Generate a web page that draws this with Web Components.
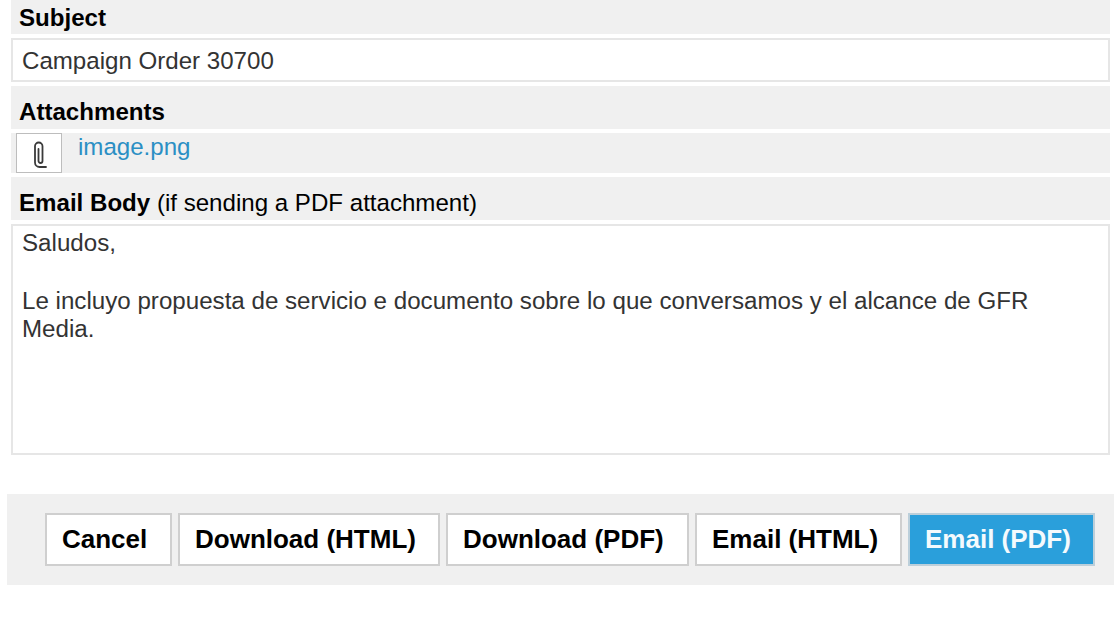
<!DOCTYPE html>
<html>
<head>
<meta charset="utf-8">
<title>Email</title>
<style>
    html, body { margin: 0; background: #fff; }
    body { font-family: "Liberation Sans", Arial, sans-serif; overflow: hidden; }
</style>
</head>
<body>
<email-form>
    <form-label style="--h: 34px; --pb: 2px">Subject</form-label>
    <form-field style="--h: 44px">Campaign Order 30700</form-field>
    <form-label style="--h: 43px">Attachments</form-label>
    <attachment-row href="#">image.png</attachment-row>
    <form-label style="--h: 43px">Email Body <span style="font-weight: normal">(if sending a PDF attachment)</span></form-label>
    <form-field style="--h: 231px" multiline>Saludos,<br><br>Le incluyo propuesta de servicio e documento sobre lo que conversamos y el alcance de GFR Media.</form-field>
    <button-bar slot="actions">
        <action-button style="--w: 127px">Cancel</action-button>
        <action-button style="--w: 262px">Download (HTML)</action-button>
        <action-button style="--w: 243px">Download (PDF)</action-button>
        <action-button style="--w: 207px">Email (HTML)</action-button>
        <action-button style="--w: 187px" primary>Email (PDF)</action-button>
    </button-bar>
</email-form>

<script>
class EmailForm extends HTMLElement {
    constructor() {
        super();
        this.attachShadow({ mode: 'open' });
        this.shadowRoot.innerHTML = `
            <style>
                :host {
                    display: block;
                    width: 1120px;
                    height: 626px;
                    box-sizing: border-box;
                    padding: 0 10px 0 11px;
                }
                .fields {
                    display: flex;
                    flex-direction: column;
                    gap: 4px;
                }
                .actions {
                    margin: 39px -4px 0 -4px;
                }
            </style>
            <div class="fields"><slot></slot></div>
            <div class="actions"><slot name="actions"></slot></div>
        `;
    }
}

class FormLabel extends HTMLElement {
    constructor() {
        super();
        this.attachShadow({ mode: 'open' });
        this.shadowRoot.innerHTML = `
            <style>
                :host {
                    display: flex;
                    align-items: flex-end;
                    height: var(--h);
                    box-sizing: border-box;
                    padding: 0 0 var(--pb, 3px) 8px;
                    background: #f0f0f0;
                    color: #000;
                    font-size: 24.1px;
                    font-weight: bold;
                    line-height: 28px;
                    white-space: pre-wrap;
                }
            </style>
            <div><slot></slot></div>
        `;
    }
}

class FormField extends HTMLElement {
    constructor() {
        super();
        this.attachShadow({ mode: 'open' });
        this.shadowRoot.innerHTML = `
            <style>
                :host {
                    display: block;
                    height: var(--h);
                    box-sizing: border-box;
                    padding: 7px 9px;
                    background: #fff;
                    border: 2px solid #e6e6e6;
                    color: #333;
                    font-size: 24.1px;
                    line-height: 28.8px;
                }
                :host([multiline]) {
                    padding-top: 3px;
                    padding-right: 60px;
                    font-size: 24.15px;
                }
            </style>
            <slot></slot>
        `;
    }
}

class AttachmentRow extends HTMLElement {
    constructor() {
        super();
        this.attachShadow({ mode: 'open' });
        this.shadowRoot.innerHTML = `
            <style>
                :host {
                    display: flex;
                    gap: 16px;
                    height: 40px;
                    box-sizing: border-box;
                    padding-left: 5px;
                    background: #f0f0f0;
                }
                .thumb {
                    display: flex;
                    align-items: center;
                    justify-content: center;
                    width: 46px;
                    height: 40px;
                    box-sizing: border-box;
                    padding: 3px 0 0 2px;
                    background: #fff;
                    border: 1px solid #bdbdbd;
                }
                a {
                    color: #2b8fc4;
                    font-size: 24.1px;
                    line-height: 28px;
                    text-decoration: none;
                }
            </style>
            <div class="thumb">
                <svg width="14" height="28" viewBox="0 0 14 28" fill="none" stroke="#3a3a3a" stroke-width="1.8" stroke-linecap="round">
                    <path d="M13 26H6.500A4.500 4.500 0 0 1 2 21.500V5.250a3.750 3.750 0 0 1 7.500 0V20a2 2 0 0 1-4 0V8"/>
                </svg>
            </div>
            <a href="${this.getAttribute('href')}"><slot></slot></a>
        `;
    }
}

class ButtonBar extends HTMLElement {
    constructor() {
        super();
        this.attachShadow({ mode: 'open' });
        this.shadowRoot.innerHTML = `
            <style>
                :host {
                    display: flex;
                    justify-content: flex-end;
                    gap: 6px;
                    height: 91px;
                    box-sizing: border-box;
                    padding: 19px 19px 0 0;
                    background: #f0f0f0;
                }
            </style>
            <slot></slot>
        `;
    }
}

class ActionButton extends HTMLElement {
    constructor() {
        super();
        this.attachShadow({ mode: 'open' });
        this.shadowRoot.innerHTML = `
            <style>
                :host {
                    display: flex;
                    align-items: center;
                    width: var(--w);
                    height: 53px;
                    box-sizing: border-box;
                    padding-left: 15px;
                    background: #fff;
                    border: 2px solid #cfcfcf;
                    color: #000;
                    font-size: 26px;
                    font-weight: bold;
                }
                :host([primary]) {
                    background: #2a9fdb;
                    border-color: #bccfda;
                    color: #f4fafd;
                }
            </style>
            <slot></slot>
        `;
    }
}

customElements.define('email-form', EmailForm);
customElements.define('form-label', FormLabel);
customElements.define('form-field', FormField);
customElements.define('attachment-row', AttachmentRow);
customElements.define('button-bar', ButtonBar);
customElements.define('action-button', ActionButton);
</script>
</body>
</html>
